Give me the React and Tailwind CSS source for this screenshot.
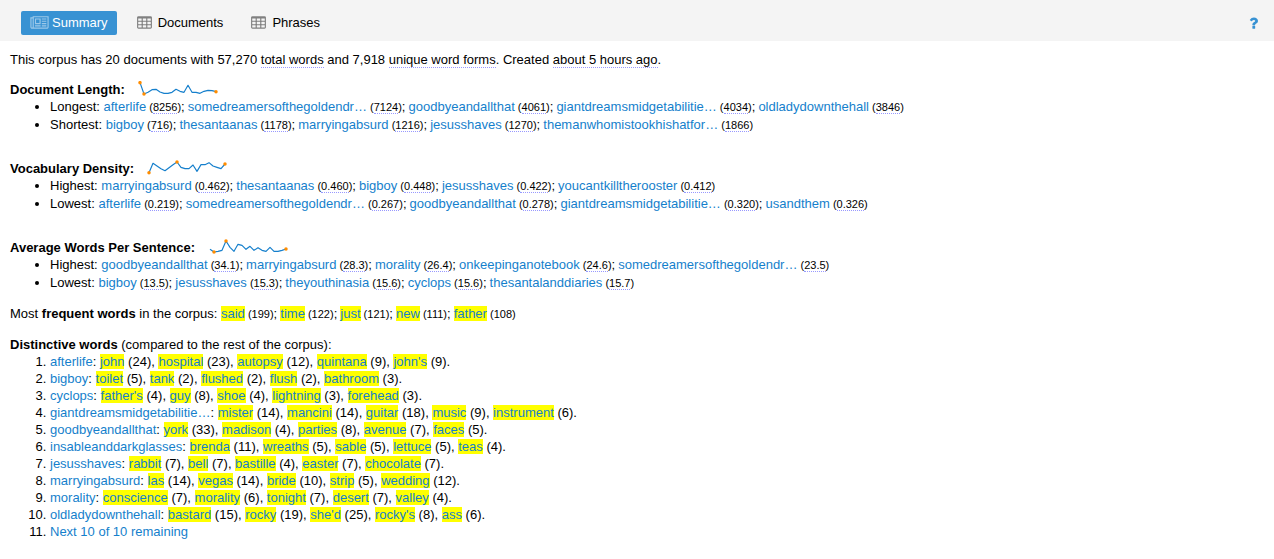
import { Fragment } from 'react';

const sections = [
  {
    title: 'Document Length:',
    line: [5, 39, 34, 26, 25, 33, 37, 37, 34, 25, 31, 34, 13, 34, 34, 37, 31, 28, 29, 32],
    spots: [0, 1, 19],
    rows: [
      ['Longest', [['afterlife', '8256'], ['somedreamersofthegoldendr…', '7124'], ['goodbyeandallthat', '4061'], ['giantdreamsmidgetabilitie…', '4034'], ['oldladydownthehall', '3846']]],
      ['Shortest', [['bigboy', '716'], ['thesantaanas', '1178'], ['marryingabsurd', '1216'], ['jesusshaves', '1270'], ['themanwhomistookhishatfor…', '1866']]],
    ],
  },
  {
    title: 'Vocabulary Density:',
    line: [38, 10, 18, 26, 32, 23, 14, 6, 22, 26, 26, 15, 34, 14, 14, 8, 18, 22, 26, 12],
    spots: [0, 7, 19],
    rows: [
      ['Highest', [['marryingabsurd', '0.462'], ['thesantaanas', '0.460'], ['bigboy', '0.448'], ['jesusshaves', '0.422'], ['youcantkilltherooster', '0.412']]],
      ['Lowest', [['afterlife', '0.219'], ['somedreamersofthegoldendr…', '0.267'], ['goodbyeandallthat', '0.278'], ['giantdreamsmidgetabilitie…', '0.320'], ['usandthem', '0.326']]],
    ],
  },
  {
    title: 'Average Words Per Sentence:',
    line: [31, 39, 37, 34, 6, 25, 37, 16, 19, 31, 22, 34, 26, 34, 37, 25, 37, 37, 34, 30],
    spots: [1, 4, 19],
    rows: [
      ['Highest', [['goodbyeandallthat', '34.1'], ['marryingabsurd', '28.3'], ['morality', '26.4'], ['onkeepinganotebook', '24.6'], ['somedreamersofthegoldendr…', '23.5']]],
      ['Lowest', [['bigboy', '13.5'], ['jesusshaves', '15.3'], ['theyouthinasia', '15.6'], ['cyclops', '15.6'], ['thesantalanddiaries', '15.7']]],
    ],
  },
];

const frequent = [['said', 199], ['time', 122], ['just', 121], ['new', 111], ['father', 108]];

const distinctive = [
  ['afterlife', [['john', 24], ['hospital', 23], ['autopsy', 12], ['quintana', 9], ["john's", 9]]],
  ['bigboy', [['toilet', 5], ['tank', 2], ['flushed', 2], ['flush', 2], ['bathroom', 3]]],
  ['cyclops', [["father's", 4], ['guy', 8], ['shoe', 4], ['lightning', 3], ['forehead', 3]]],
  ['giantdreamsmidgetabilitie…', [['mister', 14], ['mancini', 14], ['guitar', 18], ['music', 9], ['instrument', 6]]],
  ['goodbyeandallthat', [['york', 33], ['madison', 4], ['parties', 8], ['avenue', 7], ['faces', 5]]],
  ['insableanddarkglasses', [['brenda', 11], ['wreaths', 5], ['sable', 5], ['lettuce', 5], ['teas', 4]]],
  ['jesusshaves', [['rabbit', 7], ['bell', 7], ['bastille', 4], ['easter', 7], ['chocolate', 7]]],
  ['marryingabsurd', [['las', 14], ['vegas', 14], ['bride', 10], ['strip', 5], ['wedding', 12]]],
  ['morality', [['conscience', 7], ['morality', 6], ['tonight', 7], ['desert', 7], ['valley', 4]]],
  ['oldladydownthehall', [['bastard', 15], ['rocky', 19], ["she'd", 25], ["rocky's", 8], ['ass', 6]]],
];

function Sparkline({ line, spots }) {
  const x = (i) => 6 + i * 12;
  return (
    <svg className="h-[17px] w-20" viewBox="0 0 240 51" aria-hidden="true">
      <polyline points={line.map((y, i) => `${x(i)},${y}`).join(' ')} fill="none" stroke="#157fcc" strokeWidth="3.5" strokeLinejoin="round" />
      {spots.map((i) => (
        <circle key={i} cx={x(i)} cy={line[i]} r="5.2" fill="#ff8c00" />
      ))}
    </svg>
  );
}

function NewsIcon() {
  return (
    <svg className="h-4 w-[19px]" viewBox="0 0 2048 1792" fill="currentColor" aria-hidden="true">
      <path d="M1024 512H640v384h384V512zM1152 1152v128H512v-128h640zM1152 384v640H512V384h640zM1792 1152v128h-512v-128h512zM1792 896v128h-512V896h512zM1792 640v128h-512V640h512zM1792 384v128h-512V384h512zM256 1344V384H128v960q0 26 19 45t45 19 45-19 19-45zM1920 1344V256H384v1088q0 33-11 64h1483q26 0 45-19t19-45zM2048 128v1216q0 80-56 136t-136 56H192q-80 0-136-56T0 1344V256h256V128h1792z" />
    </svg>
  );
}

function TableIcon() {
  return (
    <svg className="h-4 w-[15px]" viewBox="0 0 1664 1792" fill="currentColor" aria-hidden="true">
      <path d="M512 1376v-192q0-14-9-23t-23-9H160q-14 0-23 9t-9 23v192q0 14 9 23t23 9h320q14 0 23-9t9-23zm0-384V800q0-14-9-23t-23-9H160q-14 0-23 9t-9 23v192q0 14 9 23t23 9h320q14 0 23-9t9-23zm512 384v-192q0-14-9-23t-23-9H672q-14 0-23 9t-9 23v192q0 14 9 23t23 9h320q14 0 23-9t9-23zM512 608V416q0-14-9-23t-23-9H160q-14 0-23 9t-9 23v192q0 14 9 23t23 9h320q14 0 23-9t9-23zm512 384V800q0-14-9-23t-23-9H672q-14 0-23 9t-9 23v192q0 14 9 23t23 9h320q14 0 23-9t9-23zm512 384v-192q0-14-9-23t-23-9h-320q-14 0-23 9t-9 23v192q0 14 9 23t23 9h320q14 0 23-9t9-23zm-512-768V416q0-14-9-23t-23-9H672q-14 0-23 9t-9 23v192q0 14 9 23t23 9h320q14 0 23-9t9-23zm512 384V800q0-14-9-23t-23-9h-320q-14 0-23 9t-9 23v192q0 14 9 23t23 9h320q14 0 23-9t9-23zm0-384V416q0-14-9-23t-23-9h-320q-14 0-23 9t-9 23v192q0 14 9 23t23 9h320q14 0 23-9t9-23zm128-320v1088q0 66-47 113t-113 47H160q-66 0-113-47T0 1376V288q0-66 47-113t113-47h1344q66 0 113 47t47 113z" />
    </svg>
  );
}

function HelpIcon() {
  return (
    <svg className="h-4 w-[9px]" viewBox="0 0 1024 1792" fill="currentColor" aria-hidden="true">
      <path d="M704 1256v240q0 16-12 28t-28 12H424q-16 0-28-12t-12-28v-240q0-16 12-28t28-12h240q16 0 28 12t12 28zm316-600q0 54-15.500 101t-35 76.500-55 59.500-57.500 43.500-61 35.500q-41 23-68.500 65t-27.500 67q0 17-12 32.500t-28 15.500H420q-15 0-25.500-18.500T384 1096v-45q0-83 65-156.500T592 786q59-27 84-56t25-76q0-42-46.500-74T547 548q-65 0-108 29-35 25-107 115-13 16-31 16-12 0-25-8l-164-125q-13-10-15.500-25t5.500-28q160-266 464-266 80 0 161 31t146 83 106 127.500T1020 656z" />
    </svg>
  );
}

const Tip = ({ children }) => <span className="border-b border-dotted border-[#9999ff]">{children}</span>;
const Doc = ({ children }) => <a href="#doc" className="text-[#157fcc]">{children}</a>;
const Word = ({ children }) => <a href="#term" className="bg-[#ffff00] text-[#157fcc]">{children}</a>;
const Small = ({ children }) => <span className="text-[11px]">{children}</span>;

export default function App() {
  return (
    <div className="bg-white font-['Liberation_Sans',Arial,sans-serif] text-[13px] leading-[17px] text-black">
      <header className="flex h-[41px] items-start justify-between bg-[#f4f4f4] pt-[11px] pr-4 pl-[21px] leading-4">
        <nav className="flex gap-2">
          <button className="flex h-6 items-center gap-[3px] rounded-[2px] bg-[#3892d3] px-[9px] text-white">
            <span className="opacity-50"><NewsIcon /></span>
            Summary
          </button>
          <button className="flex h-6 items-center gap-1.5 px-3">
            <span className="text-[#808080]"><TableIcon /></span>
            Documents
          </button>
          <button className="flex h-6 items-center gap-1.5 px-2">
            <span className="text-[#808080]"><TableIcon /></span>
            Phrases
          </button>
        </nav>
        <button aria-label="Help" className="flex h-6 items-center text-[#3892d3]"><HelpIcon /></button>
      </header>

      <main className="px-2.5 pt-2.5">
        <p>
          This corpus has 20 documents with 57,270 <Tip>total words</Tip> and 7,918 <Tip>unique word forms</Tip>. Created <Tip>about 5 hours ago</Tip>.
        </p>

        <div className="mt-[13px] flex flex-col gap-[26px]">
          {sections.map((s) => (
            <section key={s.title}>
              <h2 className="flex gap-[13px] font-bold">
                {s.title}
                <Sparkline line={s.line} spots={s.spots} />
              </h2>
              <ul className="list-disc pl-10 leading-[18px]">
                {s.rows.map(([label, items]) => (
                  <li key={label}>
                    {label}:{' '}
                    {items.map(([name, value], i) => (
                      <Fragment key={name}>
                        {i > 0 && <>;<Small> </Small></>}
                        <Doc>{name}</Doc>
                        <Small> (<Tip>{value}</Tip>)</Small>
                      </Fragment>
                    ))}
                  </li>
                ))}
              </ul>
            </section>
          ))}
        </div>

        <p className="mt-[13px]">
          Most <b>frequent words</b> in the corpus:{' '}
          {frequent.map(([word, count], i) => (
            <Fragment key={word}>
              {i > 0 && <>;<Small> </Small></>}
              <Word>{word}</Word>
              <Small> ({count})</Small>
            </Fragment>
          ))}
        </p>

        <section className="mt-[13px]">
          <p><b>Distinctive words</b> (compared to the rest of the corpus):</p>
          <ol className="list-decimal pl-10">
            {distinctive.map(([name, words]) => (
              <li key={name}>
                <Doc>{name}</Doc>:{' '}
                {words.map(([word, count], i) => (
                  <Fragment key={word}>
                    {i > 0 && ', '}
                    <Word>{word}</Word> ({count})
                  </Fragment>
                ))}
                .
              </li>
            ))}
            <li><Doc>Next 10 of 10 remaining</Doc></li>
          </ol>
        </section>
      </main>
    </div>
  );
}
